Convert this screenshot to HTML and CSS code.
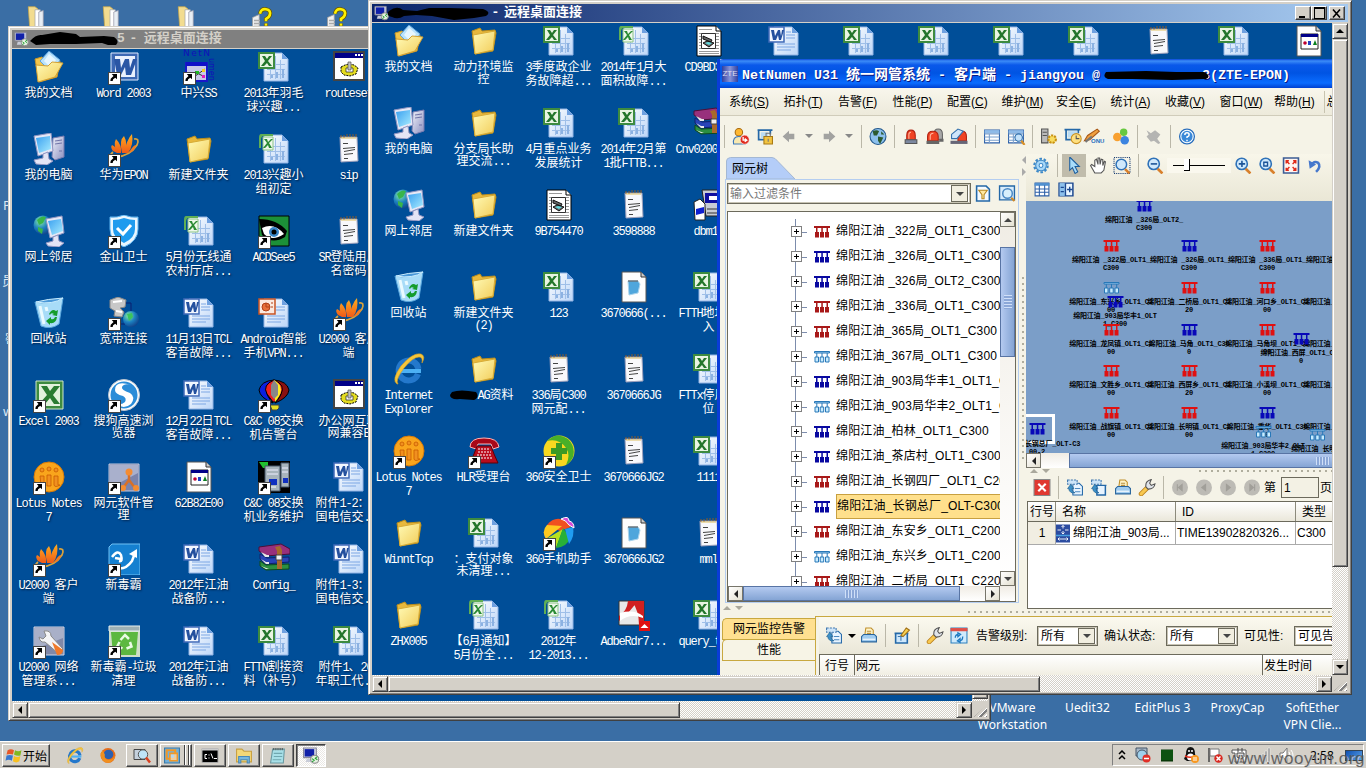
FILE: index.html
```html
<!DOCTYPE html>
<html lang="zh-CN">
<head>
<meta charset="utf-8">
<title>远程桌面连接</title>
<link rel="stylesheet" href="styles.css">
</head>
<body>
<svg class="defs" width="0" height="0">
<defs>
<linearGradient id="gf" x1="0" y1="0" x2="1" y2="1"><stop offset="0" stop-color="#fffbb8"/><stop offset="1" stop-color="#f2cc58"/></linearGradient>
<linearGradient id="gb" x1="0" y1="0" x2="1" y2="1"><stop offset="0" stop-color="#3aa0f0"/><stop offset="1" stop-color="#a8ecff"/></linearGradient>
<linearGradient id="gp" x1="0" y1="0" x2="1" y2="1"><stop offset="0" stop-color="#fff"/><stop offset="1" stop-color="#bcd6f8"/></linearGradient>
<linearGradient id="gg" x1="0" y1="0" x2="1" y2="1"><stop offset="0" stop-color="#f0f2fa"/><stop offset="1" stop-color="#8c90c0"/></linearGradient>
<linearGradient id="go" x1="0" y1="0" x2="0" y2="1"><stop offset="0" stop-color="#ffb020"/><stop offset="1" stop-color="#f05a18"/></linearGradient>
<radialGradient id="gl" cx=".35" cy=".3" r=".8"><stop offset="0" stop-color="#8cf0a0"/><stop offset=".5" stop-color="#1c80c0"/><stop offset="1" stop-color="#103880"/></radialGradient>
</defs>
<symbol id="folder" viewBox="0 0 32 32"><path d="M4 6l8-3 2 3 13-1 1 3-3 18-18 3z" fill="#e8b83c" stroke="#b98d1c"/><path d="M5 10l22-4-2 19-18 4z" fill="url(#gf)" stroke="#d7ab35"/></symbol>
<symbol id="docs" viewBox="0 0 32 32"><path d="M2 8l7-2 3 3 15 1-3 16-18 5z" fill="#f2c64c" stroke="#c6962a"/><path d="M7 10L16 0l11 9-8 13z" fill="#b9e2fc" stroke="#5fa2dc"/><path d="M11 10l5-7 7 6-5 8z" fill="#e6f6ff"/><path d="M3 14l12 1 4-4 11 1-8 14-17 5z" fill="url(#gf)" stroke="#d4a133"/></symbol>
<symbol id="pc" viewBox="0 0 32 32"><path d="M20 5l11-2v21l-9 3-3-3z" fill="url(#gg)" stroke="#777bb0"/><path d="M22 8l7-1M22 11l7-1M26 18h3" stroke="#7074a8" fill="none"/><path d="M1 3l17-3 2 18-15 5z" fill="#e6e8f6" stroke="#8e94c0"/><path d="M3 5l14-2 1 13-12 4z" fill="url(#gb)"/><path d="M10 21l5-2 1 7 4 2-6 4-11-1-2-4 9-2z" fill="#e4e5f5" stroke="#9296c2"/></symbol>
<symbol id="net" viewBox="0 0 32 32"><circle cx="10" cy="10" r="9.500" fill="url(#gl)"/><path d="M4 5q5-5 9-3l-3 6-4 2zM5 12l5 2-1 5-4-3z" fill="#39b54a"/><path d="M13 4l16-3 2 17-14 5z" fill="#e6e8f6" stroke="#8e94c0"/><path d="M15 6l13-2 2 12-11 4z" fill="url(#gb)"/><path d="M20 22l5-2 1 6 5 2-5 4-11-1-2-3 7-2z" fill="#e4e5f5" stroke="#9296c2"/></symbol>
<symbol id="bin" viewBox="0 0 32 32"><path d="M2 5Q16 8 30 1l-4 26q-8 6-18 2z" fill="#a8dcf8" stroke="#5aa7de"/><path d="M3 5Q14 2 30 1 20 8 3 5z" fill="#4a98d8" stroke="#cbeeff"/><path d="M7 9l4 18M13 10l1 4" stroke="#eafaff" stroke-width="3" fill="none"/><path d="M16 17q3-6 7-3l2-1-1 6-5-1 2-1q-3-2-4 1zM24 20q-1 7-7 6v2l-4-4 5-4v2q3 1 4-2z" fill="#149c2c"/></symbol>
<symbol id="ie" viewBox="0 0 32 32"><path d="M25 21a10 10 0 1 1 .5-5" fill="none" stroke="#2478cc" stroke-width="6"/><path d="M7 18h21" stroke="#4cb0f4" stroke-width="4"/><path d="M4 31Q-2 27 8 13 20-1 28 1q5 2 1 9 1-6-3-6-6 0-15 11Q2 27 5 31z" fill="#f6c63a" stroke="#d8a020" stroke-width=".6"/></symbol>
<symbol id="lotus" viewBox="0 0 32 32"><circle cx="16" cy="16" r="15" fill="#f9a51c" stroke="#d87a08"/><path d="M7 15l4 0v9q0 2-5 0h2zM14 14h4v11h-4zM21 15h4v9h2q-5 3-6 0z" fill="#f09020" stroke="#c85c00" stroke-width=".8"/><g fill="#f09020" stroke="#c85c00" stroke-width=".8"><circle cx="9" cy="9" r="2"/><circle cx="16" cy="8" r="2"/><circle cx="23" cy="9" r="2"/></g></symbol>
<symbol id="word" viewBox="0 0 32 32"><path d="M3 2h27v27H3z" fill="#3c68b4" stroke="#dfeaff"/><path d="M7 5h20v21H7z" fill="#e9f0fd"/><path d="M6 8h6l1 9 4-9h4l1 9 3-9h4l-6 16h-5l-1-8-4 8H9z" fill="#2a56a5"/></symbol>
<symbol id="excel" viewBox="0 0 32 32"><path d="M3 2h27v28H3z" fill="#3d8b40" stroke="#cfe8c8"/><path d="M6 5h21v22H6z" fill="#e2f2dc"/><path d="M8 7h6l3 5 4-5h6l-7 9 7 9h-6l-4-6-5 6H6l8-9z" fill="#2a7c31"/></symbol>
<symbol id="page" viewBox="0 0 32 32"><path d="M6 2h18l6 6v22H6z" fill="url(#gp)" stroke="#93b4e4"/><path d="M24 2v6h6z" fill="#6ea0e0"/></symbol>
<symbol id="wdoc" viewBox="0 0 32 32"><use href="#page"/><path d="M18 7h5M18 10h9M18 13h9M9 19h18M9 22h18M9 25h14" stroke="#7da7e4"/><path d="M1 2h15v15H1z" fill="#f2f7ff" stroke="#3f6ab8" stroke-width="1.500"/><path d="M3 5h3l1 6 3-6h2l1 6 1-6h2l-3 10h-2l-1-5-2 5H5z" fill="#24509e"/></symbol>
<symbol id="xdoc" viewBox="0 0 32 32"><use href="#page"/><path d="M11 13.500h16M9 18.500h18M9 23.500h18M12.500 14v14M17.500 5v23M22.500 9v19" stroke="#9fbfe8"/><path d="M13 24h2v3h-2zM18 21h2v6h-2zM24 18h2v9h-2z" fill="#8cb2e2"/><path d="M1 2h15v15H1z" fill="#e8f4e2" stroke="#3d8b40" stroke-width="2"/><path d="M4 5h3l2 3 2-3h3l-4 5 4 5h-3l-2-3-3 3H3l4-5z" fill="#23762b"/></symbol>
<symbol id="xdoc2" viewBox="0 0 32 32"><use href="#page"/><path d="M11 13.500h16M9 18.500h18M9 23.500h18M12.500 14v14M17.500 5v23M22.500 9v19" stroke="#9fbfe8"/><path d="M13 24h2v3h-2zM18 21h2v6h-2zM24 18h2v9h-2z" fill="#8cb2e2"/><path d="M3 1h12v2h-9q-3 0-3 4v8H1V5q0-4 2-4z" fill="#5fae55"/><path d="M5 4h10v13H5z" fill="#eef8ea" stroke="#8cc486"/><path d="M6 6h3l1 3 3-3h2l-4 4 3 5h-3l-1-3-3 3H5l4-5z" fill="#2a8a33"/></symbol>
<symbol id="ppt" viewBox="0 0 32 32"><use href="#page"/><path d="M18 10h9M18 13h9M9 19h18M9 22h18M9 25h14" stroke="#7da7e4"/><path d="M1 2h16v15H1z" fill="#fbe9e0" stroke="#c85424" stroke-width="1.500"/><circle cx="8" cy="10" r="4" fill="#e8703c" stroke="#b04018"/><path d="M8 6v4h4M14 5v2M14 9v2" stroke="#b04018" fill="none"/></symbol>
<symbol id="note" viewBox="0 0 32 32"><path d="M7 4l17 0 1 24-17 1z" fill="#f8f8fb" stroke="#9ca0bc"/><path d="M10 10.500h5M10 15.500l12-1M11 18.500l11-2M11 21.500l9-1M11 25.500h4" stroke="#444"/><path d="M8 2v3M11 2v3M14 1v3M17 1v3M20 1v3M23 1v3" stroke="#8a5a28"/><path d="M8 5h15" stroke="#e0c060"/></symbol>
<symbol id="bpage" viewBox="0 0 32 32"><path d="M4 1h19l5 5v25H4z" fill="#fdfdfd" stroke="#555"/><path d="M23 1v5h5" fill="#ccc" stroke="#333"/></symbol>
<symbol id="txt" viewBox="0 0 32 32"><use href="#bpage"/><path d="M10 10l10 0 2 3-2 9-9 2z" fill="#4fa6dc" stroke="#a9d3ec"/><path d="M10 10h10" stroke="#444"/></symbol>
<symbol id="dll" viewBox="0 0 32 32"><use href="#bpage"/><path d="M8 9h17v15H8z" fill="#fff" stroke="#222"/><path d="M8 9h17v3H8z" fill="#000088"/><circle cx="12" cy="18" r="1.800" fill="#c00030"/><path d="M15 16h3v4h-3z" fill="#2040c0"/><path d="M22 15l2 5h-4z" fill="#0a8020"/></symbol>
<symbol id="scan" viewBox="0 0 32 32"><path d="M4 1h19l5 5v25H4z" fill="#fff" stroke="#000"/><path d="M6 4.500h13M6 28.500h20M6 26.500h20M6 8.500h20M6 11.500h20M6 14.500h20M6 17.500h20M6 20.500h20M6 23.500h20" stroke="#999" fill="none"/><path d="M23 1v5h5" stroke="#000" fill="#fff"/><path d="M8.500 8.500h14v15h-14z" fill="#fff" stroke="#333"/><path d="M10 11l9 4-1 2-8-3zM10 18l4-2 7 2-5 4z" fill="#666" stroke="#111"/><path d="M12 18l3-1 4 1-3 2z" fill="#5fd8dc"/></symbol>
<symbol id="exe" viewBox="0 0 32 32"><path d="M1 1h30v28H1z" fill="#fff" stroke="#444" stroke-width="2"/><path d="M2 2h28v5H2z" fill="#000088"/><path d="M22 3h2v2h-2zM25 3h2v2h-2zM28 3h2v2h-2z" fill="#fff"/><path d="M8 16l4-2 4-1 5 1 4 3-2 6-6 2-6-1-3-3z" fill="#e4dc20" stroke="#000" stroke-dasharray="2 1"/><path d="M13 17h7v4h-7z" fill="#fff" stroke="#222" stroke-width=".7"/><path d="M15 11h3v8h-3z" fill="#c0c0c0" stroke="#555" stroke-width=".7"/></symbol>
<symbol id="rar" viewBox="0 0 32 32"><path d="M1 4l22-3 9 5v5l-24 2-7-5z" fill="#98307c" stroke="#4a1038"/><path d="M2 11l7 4 22-1v5l-23 2-6-5z" fill="#2844b8" stroke="#10206a"/><path d="M2 18l6 4 23-1v5L8 27l-6-4z" fill="#2c9040" stroke="#0e4a1c"/><path d="M3 9l6 3 2 0v2H7zM3 16l5 3h3v2H8zM3 23l5 3h3" fill="#e8e8e8"/><path d="M17 4l5-1 2 4v19h-5V8z" fill="#a86a2c"/><path d="M18 12h6v5h-6z" fill="#eee" stroke="#444"/></symbol>
<symbol id="hw" viewBox="0 0 32 32"><path d="M5 19Q-1 24 8 24 22 23 29 12 32 5 26 6" fill="none" stroke="#d9a23c" stroke-width="1.700"/><path d="M5 18Q2 14 4 12q5 2 5 8zM9 20Q5 11 8 6q6 6 5 14zM14 20Q11 7 16 3q4 7 1 17zM17 20Q18 7 24 1q2 11-4 19z" fill="url(#go)"/><path d="M21 20q4-8 7-8-1 6-7 8z" fill="#f47a20"/></symbol>
<symbol id="shield" viewBox="0 0 32 32"><path d="M2 2q7 1 14-2 7 3 14 2v12q0 12-14 18Q2 26 2 14z" fill="#e9f6ff" stroke="#5db4f0"/><path d="M5 5q6 0 11-2 6 2 11 2v9q0 9-11 14Q5 23 5 14z" fill="#1f9bee"/><path d="M9 13l6 6 8-9" fill="none" stroke="#fff" stroke-width="3"/></symbol>
<symbol id="acd" viewBox="0 0 32 32"><path d="M1 1h30v30H1z" fill="#1c9038" stroke="#000"/><path d="M1 4q18 0 28 12l-2 6Q14 30 4 20z" fill="#000"/><path d="M4 13q12-6 22 6-12 8-20 0z" fill="#fff"/><circle cx="16" cy="17" r="5" fill="#3a86c8"/><circle cx="16" cy="17" r="2.500"/></symbol>
<symbol id="band" viewBox="0 0 32 32"><path d="M2 3l8-3 8 3-1 7-5 1 4 4-2 5-8-1 1-5-5-3z" fill="#c8c8c8" stroke="#888"/><path d="M5 5l9-1M8 14l6 1" stroke="#fff" stroke-width="2"/><path d="M18 6h5v12M10 27h7" fill="none" stroke="#0a1f70"/><circle cx="23" cy="22" r="8" fill="url(#gl)"/><path d="M19 17l5-1 1 4-4 4z" fill="#3cc45c"/></symbol>
<symbol id="sogou" viewBox="0 0 32 32"><circle cx="16" cy="16" r="15.500" fill="#fff" stroke="#bbc5d0"/><circle cx="16" cy="16" r="13.500" fill="#2a8cd8"/><path d="M23 6Q7 1 7 11q0 4 8 6 4 2 2 6-3 3-9 2 8 6 15 0 5-7-1-11-9-3-8-6 2-4 9-2z" fill="#fff"/></symbol>
<symbol id="ball" viewBox="0 0 32 32"><path d="M16 1Q3 2 1 11q1 8 14 13Q1 9 16 1z" fill="#0a20e0" stroke="#000"/><path d="M16 1q13 1 15 10-1 8-14 13Q31 9 16 1z" fill="#8a1010" stroke="#000"/><path d="M16 1Q4 6 9 15l6 8h2l6-8Q28 6 16 1z" fill="#f02020" stroke="#000"/><path d="M16 1q7 4 7 10 0 5-6 12z" fill="#ffec20"/><path d="M13 6l3-5 4 5v10l-4 4-3-4z" fill="#888"/><path d="M12 26h9v3l-2 2h-5z" fill="#e8e020" stroke="#444"/></symbol>
<symbol id="topo" viewBox="0 0 32 32"><path d="M1 3h30v27H1z" fill="#7b84ac" stroke="#c5c9dc"/><path d="M2 4h28v8L2 27z" fill="#a9b0cc"/><path d="M21 13v6l-6 8M21 19l6 8" stroke="#d87028" stroke-width="2.500" fill="none"/><g fill="#f48c32"><circle cx="21" cy="11" r="3.500"/><circle cx="15" cy="27" r="3"/><circle cx="28" cy="27" r="3"/></g></symbol>
<symbol id="srv" viewBox="0 0 32 32"><path d="M0 0h32v32H0z"/><path d="M1 1h9v6H5z" fill="#20c030"/><path d="M7 5h15v25H7zM23 2h8v24h-8z" fill="#a8b4bc" stroke="#456"/><path d="M9 9h11M9 13h11M24 7h6M24 11h6" stroke="#eef"/><path d="M11 18h8v6h-8zM25 17h5v5h-5z" fill="#1030c0"/><path d="M13 26h5" stroke="#fff"/></symbol>
<symbol id="duba" viewBox="0 0 32 32"><path d="M4 1h28v31H1V4z" fill="#1580d0" stroke="#6fc0f4"/><path d="M4 14q6-8 9-2 2 7-2 6M13 16l-6-1M6 24q10 5 18-6l3-8" fill="none" stroke="#fff" stroke-width="2.500"/><path d="M21 11l8-5 0 9z" fill="#fff"/></symbol>
<symbol id="gtrash" viewBox="0 0 32 32"><path d="M1 1h31v31H1z" fill="#cfdfc8"/><path d="M1 1h31v5H1z" fill="#9db0b5" stroke="#e8f0f0"/><path d="M3 7h27l-2 23H5z" fill="#5cb840"/><path d="M12.500 15l4.500-5 4 4M22 17l1.500 4.500-5 2M11.500 17l-2 4 5 2.500" fill="none" stroke="#eafbe4" stroke-width="2.500"/></symbol>
<symbol id="wren" viewBox="0 0 32 32"><path d="M1 2h30v28H1z" fill="#8088a8" stroke="#d0d4e4"/><path d="M2 3h28v10L2 24z" fill="#a9b0c8"/><path d="M11 6q7-1 7 5l12 13-4 5-14-12q-5 1-6-5l4 2 3-3z" fill="#f4f4f6" stroke="#888"/><path d="M19 17l11 8q0 5-6 5z" fill="#f0792a"/></symbol>
<symbol id="nnum" viewBox="0 0 32 32"><path d="M3 12h21v18H3z" fill="#c8c8e8" stroke="#1818c8" stroke-width="2"/><path d="M3 11h21v4H3z" fill="#1010c8"/><path d="M8 28l14-10M22 26l-8-4" stroke="#333"/><path d="M12 20h4v3h-4z" fill="#20b820"/><path d="M19 18h3v3h-3z" fill="#f0d020"/><path d="M19 24h3v3h-3z" fill="#e020c0"/></symbol>
<symbol id="phone" viewBox="0 0 32 32"><path d="M2 12Q2 3 16 3q14 0 15 9l-6 2-2-5H10l-2 5z" fill="#a80818" stroke="#ffb0b0"/><path d="M9 11h14l3 8 4 9H2l4-9z" fill="#b80c1c" stroke="#5a0008"/><path d="M10 14h12M10 17h13M9 20h15M10 23h14" stroke="#fff" stroke-dasharray="2 1"/></symbol>
<symbol id="s360" viewBox="0 0 32 32"><circle cx="16" cy="16" r="15.500" fill="#f8d820"/><path d="M4 6Q14-4 25 4q8 8 5 18-3 6-7 8 5-10 0-17-7-10-19-7z" fill="#48b028"/><path d="M13 8h6v5h5v6h-5v6h-6v-6H8v-6h5z" fill="#3c9a24"/></symbol>
<symbol id="p360" viewBox="0 0 32 32"><path d="M4 8Q12-2 23 4l5 6-11 4z" fill="#f05020"/><path d="M4 8l15 1-16 13Q-2 14 4 8z" fill="#ffc820"/><path d="M3 22l17-10-7 19Q6 30 3 22z" fill="#b8e020"/><path d="M20 11l7 10q-3 9-14 10z" fill="#28b038"/><path d="M22 12l8-2q2 9-4 17z" fill="#209cf0"/><path d="M18 2q8-4 8 2 5 1 5 7l-5-3q-3-5-8-6z" fill="#d848d8" stroke="#fff"/></symbol>
<symbol id="pdf" viewBox="0 0 32 32"><path d="M1 2h25v24H1z" fill="#e8e8e8" stroke="#333"/><path d="M10 2h10L10 14l-9 8v-5q8-5 9-15zM14 2h12v24l-5 0q0-14-7-24z" fill="#d02020"/><path d="M2 14q14-4 23 3v2Q12 14 2 22z" fill="#fff"/><path d="M21 22h11v10H21z" fill="#e01010"/><path d="M26.500 25l4 4h-8z" fill="#fff"/></symbol>
<symbol id="dbm" viewBox="0 0 32 32"><path d="M9 1h23v26H13z" fill="#c8ccd4" stroke="#222"/><path d="M12 4h20v10H12z" fill="#1010a0"/><path d="M16 7h9v4h-9z" fill="#fff"/><path d="M1 13l6-3 5 5v16H2z" fill="#fff" stroke="#222"/><path d="M3 20l8-2v6l-8 2z" fill="#1020d0"/><path d="M14 20h18M14 24h18" stroke="#333"/></symbol>
<symbol id="qdoc" viewBox="0 0 32 32"><path d="M2 14l9-4v20H2z" fill="#eee" stroke="#999"/><path d="M4 18h8M4 22h8M4 26h8" stroke="#aaa" stroke-width="2"/><path d="M12 9q1-7 8-6 7 1 5 8-1 3-5 5v3M20 22v3" fill="none" stroke="#665500" stroke-width="5.500"/><path d="M12 9q1-7 8-6 7 1 5 8-1 3-5 5v3M20 22v3" fill="none" stroke="#fff000" stroke-width="3.500"/></symbol>
<symbol id="vfold" viewBox="0 0 32 32"><path d="M3 1h9l4 3v26H5z" fill="#f2dc90" stroke="#caa848"/><path d="M12 5h7v25h-7z" fill="#fff" stroke="#aaa"/><path d="M17 8l6-2v24h-6z" fill="#e8eef4" stroke="#99a"/></symbol>
<symbol id="rdp" viewBox="0 0 16 16"><path d="M1 1h12v9H1z" fill="#d4d8e8" stroke="#889"/><path d="M2 2h9v7H2z" fill="#1020a8"/><path d="M4 11h5l2 3H3z" fill="#c8ccd8"/><circle cx="11.500" cy="11.500" r="3.800" fill="#e4f0e0" stroke="#888"/><path d="M9 11l2 1.500L9 14M14 9l-2 1.500 2 1.500" stroke="#20a030" fill="none"/></symbol>
<symbol id="olt" viewBox="0 0 16 12"><path d="M0 0h16v2H0z"/><path d="M2 2h1.500v4H2zM7.300 2h1.500v4H7.300zM12.500 2H14v4h-1.500z"/><path d="M1 6h4v5.500H1zM6 6h4v5.500H6zM11 6h4v5.500h-4z"/></symbol>
<symbol id="olth" viewBox="0 0 16 12"><path d="M.5.500h15v1.500H.5zM2.800 2v4M8 2v4M13.200 2v4" fill="#9fd0f4" stroke="#2878b8"/><path d="M1 6h3.500v5H1zM6.200 6h3.500v5H6.200zM11.500 6H15v5h-3.500z" fill="#c8ecff" stroke="#2878b8"/></symbol>
<symbol id="usr" viewBox="0 0 16 16"><circle cx="6" cy="4" r="3.500" fill="#ffb830" stroke="#a86a10"/><path d="M1 15q-1-7 5-7t6 7z" fill="#f8e8b0" stroke="#3c78b8"/><circle cx="11.500" cy="11" r="4.300" fill="#e02c20" stroke="#fff" stroke-width=".6"/><path d="M10 8.500v3h3M11.500 10l2 1.500-2 1.500" stroke="#fff" fill="none" stroke-width="1.200"/></symbol>
<symbol id="lock" viewBox="0 0 16 16"><path d="M1 2h14M2 2v9h5M13 2v4" stroke="#2468a8" stroke-width="1.600" fill="none"/><path d="M4 4h7v6H4z" fill="#b9dcf4"/><path d="M7 8h8v7H7z" fill="#f2c440" stroke="#a87810"/><path d="M9 8V5h4v3M11 10v3" stroke="#777" fill="none"/></symbol>
<symbol id="la" viewBox="0 0 16 16"><path d="M2 8l6-5.500v3h5v5H8v3z" fill="#a2a2a0"/></symbol>
<symbol id="ra" viewBox="0 0 16 16"><path d="M14 8L8 2.500v3H3v5h5v3z" fill="#a2a2a0"/></symbol>
<symbol id="globe" viewBox="0 0 16 16"><circle cx="8" cy="8" r="7.500" fill="#8cc0ec" stroke="#24588c"/><path d="M3 3q4-2 6 0l-2 4-3 0zM8 8l5 1-3 6-2-3zM11 3l3 3-3 0z" fill="#2c5a30"/></symbol>
<symbol id="alarm" viewBox="0 0 16 16"><path d="M4 11V7q0-5 4-5t4 5v4z" fill="#f04424" stroke="#b02010"/><path d="M6 10V6q0-2 2-2" stroke="#ffb8a0" fill="none"/><path d="M2.500 11h11v3.500h-11z" fill="#7c88a0" stroke="#555"/></symbol>
<symbol id="alarm2" viewBox="0 0 16 16"><path d="M7 9V6q0-5 4-5t4 5v5h-4z" fill="#a8a8a8" stroke="#666"/><path d="M1 12V8q0-5 5-5t5 5v4z" fill="#f04424" stroke="#b02010"/><path d="M3.500 11V8q0-3 3-3" stroke="#ffb8a0" fill="none"/><path d="M0 12h12v3H0zM12 10h4v3h-4z" fill="#666"/></symbol>
<symbol id="alarm3" viewBox="0 0 16 16"><path d="M7 12V8q0-5 4-5t4 5v4z" fill="#f04424" stroke="#b02010"/><path d="M0 12h16v3H0z" fill="#667"/><path d="M1 6l6-5 5 2-6 7H1z" fill="#cfe5fa" stroke="#3470ac"/></symbol>
<symbol id="tbl" viewBox="0 0 16 16"><path d="M1 2h14v12H1z" fill="#fff" stroke="#2c5fa8"/><path d="M1 2h14v3H1z" fill="#8fbbe8"/><path d="M1 5.500h14M1 8.500h14M1 11.500h14M5.500 5v9" stroke="#7ba0cc" fill="none"/></symbol>
<symbol id="tblz" viewBox="0 0 16 16"><use href="#tbl"/><circle cx="10.500" cy="9" r="3.500" fill="#c4e2fa" stroke="#2a6cac"/><path d="M13 12l3 4" stroke="#d89028" stroke-width="2"/></symbol>
<symbol id="boxg" viewBox="0 0 16 16"><path d="M1 1h6v13H1z" fill="#bbb" stroke="#555"/><path d="M2 4h4M2 7h4" stroke="#555"/><circle cx="11" cy="10.500" r="3.500" fill="#f8dc60" stroke="#c89010" stroke-width="2" stroke-dasharray="2 1"/></symbol>
<symbol id="clk" viewBox="0 0 16 16"><path d="M0 1.500h15M1.500 1v10H6M13 1v4" fill="none" stroke="#2468a8" stroke-width="1.600"/><path d="M3 3h9v6H3z" fill="#b9dcf4"/><circle cx="11" cy="10" r="4.700" fill="#ffe080" stroke="#c89020"/><path d="M11 7v3h3" stroke="#555" fill="none"/></symbol>
<symbol id="onu" viewBox="0 0 20 16"><path d="M1 12l5-1 9-8-2-2-9 6z" fill="#f0a040" stroke="#a85818"/><path d="M2 13l6-5" stroke="#777" stroke-width="2"/></symbol>
<symbol id="dots" viewBox="0 0 16 16"><circle cx="10.500" cy="4" r="3.500" fill="#68c840"/><circle cx="4.500" cy="8.500" r="4" fill="#f8a030"/><circle cx="11.500" cy="11.500" r="4" fill="#3c84e0"/></symbol>
<symbol id="unp" viewBox="0 0 16 16"><path d="M1 2l4 3 4-3 5 4-3 4 3 4-2 1-4-3-3 1-4-5 2-2z" fill="#b4b4b2"/></symbol>
<symbol id="help" viewBox="0 0 16 16"><circle cx="8" cy="8" r="7" fill="#3a88d8" stroke="#2468b8"/><circle cx="8" cy="8" r="5.800" fill="none" stroke="#fff"/><path d="M6 6.500q0-2 2-2t2 2q0 1-2 2v1M8 11v1.500" stroke="#fff" stroke-width="1.400" fill="none"/></symbol>
<symbol id="funl" viewBox="0 0 16 16"><path d="M2 1h9l3 3v11H2z" fill="#f4faff" stroke="#2468a8" stroke-width="1.500"/><path d="M4 5h8L9 9v4H7V9z" fill="#ffe8a0" stroke="#b88820"/></symbol>
<symbol id="find" viewBox="0 0 16 16"><path d="M1 1h14v13H1z" fill="#d8ecfc" stroke="#2468a8" stroke-width="1.300"/><circle cx="8.500" cy="8" r="4.500" fill="#d8effc" stroke="#4a88c4" stroke-width="1.400"/><path d="M12 12l3 3" stroke="#d08828" stroke-width="2"/></symbol>
<symbol id="gear" viewBox="0 0 16 16"><circle cx="8" cy="8" r="6.300" fill="none" stroke="#3c88c8" stroke-width="2" stroke-dasharray="2.400 1.600"/><circle cx="8" cy="8" r="5" fill="#a8d8f8" stroke="#3c88c8"/><circle cx="8" cy="8" r="1.800" fill="#fff" stroke="#3c88c8"/></symbol>
<symbol id="cur" viewBox="0 0 16 16"><path d="M4 0l9 9-4 0 2.500 5-2.500 1.500L6.500 10 4 12.500z" fill="#a8dcfa" stroke="#1c5c9c"/></symbol>
<symbol id="hand" viewBox="0 0 16 16"><path d="M5 15L1 8l1-1 3 2V3l1.500-1L8 7V1l1.500 0L10 7l1-5 1.500.5V8l1.500-4 1 .5-1.500 8L11 15z" fill="#fff" stroke="#555"/></symbol>
<symbol id="mag" viewBox="0 0 16 16"><circle cx="6.800" cy="6.500" r="5.300" fill="#d0e9fc" stroke="#2f72b8" stroke-width="1.500"/><path d="M10.500 11l4.500 4.500" stroke="#d8802c" stroke-width="2.500"/></symbol>
<symbol id="magm" viewBox="0 0 16 16"><use href="#mag"/><path d="M4 6.500h6" stroke="#1c5498" stroke-width="1.500"/></symbol>
<symbol id="magp" viewBox="0 0 16 16"><use href="#mag"/><path d="M4 6.500h6M7 3.500v6" stroke="#1c5498" stroke-width="1.500"/></symbol>
<symbol id="mago" viewBox="0 0 16 16"><use href="#mag"/><path d="M5 5h3.500v3.500H5z" fill="none" stroke="#1c5498" stroke-width="1.300"/></symbol>
<symbol id="mags" viewBox="0 0 16 16"><path d="M.5.500h15v15H.5z" fill="none" stroke="#123870" stroke-dasharray="1 1"/><use href="#mag" width="15" height="15" x="1" y="1"/></symbol>
<symbol id="fit" viewBox="0 0 16 16"><path d="M1 1h14v14H1z" fill="#fff4f0" stroke="#3c5c94" stroke-width="1.500"/><path d="M3.500 6V3.500H6M10 3.500h2.500V6M3.500 10v2.500H6M12.500 10v2.500H10M3.500 3.500l3 3M12.500 3.500l-3 3M3.500 12.500l3-3M12.500 12.500l-3-3" stroke="#e02818" fill="none" stroke-width="1.300"/></symbol>
<symbol id="undo" viewBox="0 0 16 16"><path d="M4 8q3-5 7-2.500Q14 9 9 14" fill="none" stroke="#4678cc" stroke-width="2.400"/><path d="M2 3l1 8 6-4z" fill="#4678cc"/></symbol>
<symbol id="cal" viewBox="0 0 16 16"><path d="M1.500 2h13v12h-13z" fill="#fff" stroke="#2c5fa8"/><path d="M1 2h14v2.500H1z" fill="#5090d0"/><path d="M1.500 7.500h13M1.500 10.500h13M5.500 4v10M10.500 4v10" stroke="#2c5fa8" fill="none"/></symbol>
<symbol id="spl" viewBox="0 0 16 16"><path d="M1.500 2h13v12h-13z" fill="#eaf6ff" stroke="#1c4890" stroke-width="1.400"/><path d="M2 2h5v12H2z" fill="#8cc0ec"/><path d="M7.500 2v12M9 8h5M11.500 5.500v5M3 6h3M3 10h3" stroke="#1c4890" stroke-width="1.300" fill="none"/></symbol>
<symbol id="cls" viewBox="0 0 16 16"><path d="M.5.500h15v15H.5z" fill="#e03830" stroke="#888"/><path d="M4.500 4.500l7 7M11.500 4.500l-7 7" stroke="#fff" stroke-width="2"/></symbol>
<symbol id="exp" viewBox="0 0 16 16"><path d="M6 4h6l3 3v8H6z" fill="#e8f4ff" stroke="#2468a8"/><path d="M8 9h5M8 12h5" stroke="#4c88c0"/><path d="M1 1h9v4H1z" fill="#cce4f8" stroke="#4078b0" stroke-dasharray="2 1"/><path d="M1 9l3-4 3 4H5q0 3 3 4-5 1-6-4z" fill="#3c90c8" stroke="#1c5c8c" stroke-width=".6"/></symbol>
<symbol id="exp2" viewBox="0 0 16 16"><path d="M5 6h10M6 6v9h8V6" fill="#e8f4ff" stroke="#2468a8" stroke-width="1.400"/><path d="M1 1h9v4H1z" fill="#cce4f8" stroke="#4078b0" stroke-dasharray="2 1"/><path d="M1 9l3-4 3 4H5q0 3 3 4-5 1-6-4z" fill="#3c90c8" stroke="#1c5c8c" stroke-width=".6"/></symbol>
<symbol id="prn" viewBox="0 0 16 16"><path d="M4 8l1-7h5l2 2v5z" fill="#fff4c8" stroke="#c0902c"/><path d="M6 4h4M6 6h4" stroke="#b89040"/><path d="M1 9l2-2h10l2 2v5H1z" fill="#a0ccf0" stroke="#28649c"/><path d="M2 11.500h12" stroke="#fff"/></symbol>
<symbol id="key" viewBox="0 0 16 16"><path d="M2.500 14l7-7" stroke="#b87c18" stroke-width="4.500" stroke-linecap="round"/><path d="M2.500 14l7-7" stroke="#f8c850" stroke-width="3" stroke-linecap="round"/><path d="M7 7.500Q6 2 12 .5L10.500 4 12 6l3.500-1.500Q15 9.500 9 9.500z" fill="#e0e4ea" stroke="#555"/></symbol>
<symbol id="edit" viewBox="0 0 16 16"><path d="M1 6h13M2 6v9h11V6" fill="#cfe8fc" stroke="#2468a8" stroke-width="1.500"/><path d="M4 9h5M7 9v4" stroke="#3c78b0"/><path d="M7 8l5-7 3 2-6 6z" fill="#f8d050" stroke="#a07018"/></symbol>
<symbol id="ref" viewBox="0 0 16 16"><path d="M.5 1h15v14H.5z" fill="#cfeafc" stroke="#2c80c0"/><path d="M0 1h16v3H0z" fill="#e05048"/><path d="M4.500 10q0-3 3-3M11.500 9q0 4-3 4M7 5.500v3.500l2.500-2zM9 11v3.500L6.500 13z" stroke="#1c78c0" fill="none" stroke-width="1.200"/></symbol>
<symbol id="nav1" viewBox="0 0 16 16"><circle cx="8" cy="8" r="7.500" fill="#bdbbb5"/><path d="M10 5v6L6.500 8zM5.500 5v6" fill="#a19f99" stroke="#a19f99"/></symbol>
<symbol id="nav2" viewBox="0 0 16 16"><circle cx="8" cy="8" r="7.500" fill="#bdbbb5"/><path d="M10 4v8L5 8z" fill="#a19f99"/></symbol>
<symbol id="nav3" viewBox="0 0 16 16"><circle cx="8" cy="8" r="7.500" fill="#bdbbb5"/><path d="M6 4v8l5-4z" fill="#a19f99"/></symbol>
<symbol id="nav4" viewBox="0 0 16 16"><circle cx="8" cy="8" r="7.500" fill="#bdbbb5"/><path d="M6 5v6l3.500-3zM10.500 5v6" fill="#a19f99" stroke="#a19f99"/></symbol>
<symbol id="ne" viewBox="0 0 14 18"><path d="M0 0h14v18H0z" fill="#2c4ca0"/><path d="M0 11h14" stroke="#48a0e0" stroke-width="1.500"/><path d="M7 1v3M7 6.500v3M1.500 5.500H5M12.500 5.500H9M2 14.500h10M3.500 13L2 14.500 3.500 16M10.500 13l1.500 1.500L10.500 16M5.500 2.500L7 1l1.500 1.500M5.500 8L7 9.500 8.500 8" stroke="#fff" fill="none" stroke-width=".9"/></symbol>
<symbol id="ff" viewBox="0 0 16 16"><circle cx="8" cy="8" r="7" fill="#e86c18"/><circle cx="8.500" cy="7" r="4.500" fill="#2c60b0"/><path d="M1 6q0 8 7 9 6-1 7-8-2 5-6 5-5 0-4-5L3 3z" fill="#f09020"/></symbol>
<symbol id="seek" viewBox="0 0 18 16"><path d="M1 2h11v10H1z" fill="#c4d0dc" stroke="#444"/><circle cx="10" cy="7" r="4.700" fill="#bfe4f8" stroke="#555"/><path d="M13 10l4 5" stroke="#d84020" stroke-width="2.500"/></symbol>
<symbol id="vm" viewBox="0 0 16 16"><path d="M1 1h14v14H1z" fill="#70b0dc" stroke="#3878a8"/><path d="M3 3h8v8H3z" fill="none" stroke="#f09828" stroke-width="2"/><path d="M6 6h7v7H6z" fill="#fff" fill-opacity=".5" stroke="#f09828" stroke-width="1.500"/></symbol>
<symbol id="cmd" viewBox="0 0 18 16"><path d="M1 1h16v14H1z" stroke="#aaa"/><path d="M1 1h16v2H1z" fill="#ccc"/><path d="M6 7H4v4h2M8 7v1M8 10v1M10 6l2 5M13 11h3" stroke="#fff" fill="none"/></symbol>
<symbol id="expl" viewBox="0 0 16 16"><path d="M1 2h5l2 2h7v10H1z" fill="#f4d878" stroke="#c8a040"/><path d="M3 15V9h10v6h-2v-3H5v3z" fill="#78b8e0" stroke="#4888b8"/></symbol>
<symbol id="nb" viewBox="0 0 16 16"><path d="M3 2h11l-1 13H1z" fill="#a8e0e8" stroke="#6898a0"/><path d="M4 6h8M4 9h8M3 12h8" stroke="#70a8b0"/><path d="M4 1v2M6 1v2M8 1v2M10 1v2M12 1v2" stroke="#555"/></symbol>
<symbol id="win" viewBox="0 0 16 16"><path d="M2 3q3-2 6 0L7 7Q4 6 1 7z" fill="#e85828"/><path d="M9 3q3 2 6 0l-1 5q-3 1-6-1z" fill="#80b820"/><path d="M1 8q3-1 6 0l-1 5q-3-2-6 0z" fill="#3878d0"/><path d="M8 8.500q3 2 6 0l-1 5q-3 2-6 0z" fill="#f8c020"/></symbol>
<symbol id="t1" viewBox="0 0 16 16"><path d="M1 1h11v8H1z" fill="#a8b8c8" stroke="#456"/><circle cx="7" cy="8" r="5" fill="#9fd0ec" stroke="#456"/><circle cx="11.500" cy="11.500" r="4" fill="#e03028"/><path d="M9 11.500h5" stroke="#fff" stroke-width="1.500"/></symbol>
<symbol id="t2" viewBox="0 0 12 12"><path d="M0 0h12v12H0z" fill="#083808"/><path d="M1 1v10M3 1v10M5 1v10M7 1v10M9 1v10M11 1v10" stroke="#18a028" stroke-dasharray="1 1"/></symbol>
<symbol id="t3" viewBox="0 0 16 16"><path d="M3 7q0-7 4.500-7T12 7l2 5-3 2H4l-3-2z" fill="#111"/><circle cx="7.500" cy="10" r="3.500" fill="#fff"/><path d="M6 3v2M9 3v2" stroke="#fff" stroke-width="1.500"/><path d="M2 8q6 3 10 0v2q-5 2-10 0z" fill="#e03020"/><circle cx="12" cy="12" r="4" fill="#f89820"/><path d="M10 11h4M10 13h4" stroke="#fff"/></symbol>
<symbol id="t4" viewBox="0 0 16 16"><path d="M2 1v14" stroke="#444" stroke-width="1.500"/><path d="M3 2h9v7H3z" fill="#fff" stroke="#777"/><circle cx="11.500" cy="11.500" r="4.200" fill="#d82820"/><path d="M9.500 9.500l4 4M13.500 9.500l-4 4" stroke="#fff" stroke-width="1.500"/></symbol>
<symbol id="t5" viewBox="0 0 16 16"><path d="M1 3h14v12H4V6H1z" fill="#fff" stroke="#555"/><path d="M7 1v4M11 1v4M6 6h7v4l-3 2-4-2zM10 12v3" stroke="#444" fill="#ddd"/></symbol>
<symbol id="t6" viewBox="0 0 16 16"><path d="M1 12h2v3H1zM4 10h2v5H4zM7 7h2v8H7zM10 4h2v11h-2zM13 1h2v14h-2z" fill="#999" stroke="#fff" stroke-width=".4"/></symbol>
<symbol id="t7" viewBox="0 0 16 16"><path d="M1 6h3l4-5v14l-4-5H1z" fill="#fff" stroke="#777"/><path d="M10 5q2 3 0 6M12 3q4 5 0 10" stroke="#fff" fill="none"/></symbol>
</svg>

<main class="desk">
  <div class="dk" style="left:0;top:6px"><svg><use href="#vfold"/></svg></div>
  <div class="dk" style="left:75px;top:6px"><svg><use href="#vfold"/></svg></div>
  <div class="dk" style="left:150px;top:6px"><svg><use href="#vfold"/></svg></div>
  <div class="dk" style="left:225px;top:7px"><svg><use href="#qdoc"/></svg></div>
  <div class="dk" style="left:300px;top:7px"><svg><use href="#qdoc"/></svg></div>
  <span class="frag" style="left:3px;top:197px">P</span>
  <span class="frag" style="left:2px;top:272px">员</span>
  <span class="frag" style="left:5px;top:330px">密</span>
  <span class="frag" style="left:3px;top:403px">w</span>
  <span class="cap" style="left:975px">VMware<br>Workstation</span>
  <span class="cap" style="left:1050px">Uedit32</span>
  <span class="cap" style="left:1125px">EditPlus 3</span>
  <span class="cap" style="left:1200px">ProxyCap</span>
  <span class="cap" style="left:1275px">SoftEther<br>VPN Clie...</span>

  <section class="rdp rdp-back">
    <header class="rt"><svg class="i16"><use href="#rdp"/></svg><svg class="blot" width="90" height="14" viewBox="0 0 90 14"><path d="M0 9Q6 2 12 3L30 0l16 2 4 3 24-1 10 1q6 4 2 8l-8 0-6-2-26 1-26 0L6 13z"/></svg><b>5</b><b class="d">-</b><span>远程桌面连接</span></header>
    <div class="remote">
      <div class="icons shade">
<div class="c"><svg><use href="#docs"/></svg><p>我的文档</p></div>
<div class="c"><svg><use href="#pc"/></svg><p>我的电脑</p></div>
<div class="c"><svg><use href="#net"/></svg><p>网上邻居</p></div>
<div class="c"><svg><use href="#bin"/></svg><p>回收站</p></div>
<div class="c k"><svg><use href="#excel"/></svg><p><i>Excel 2003</i></p></div>
<div class="c k"><svg><use href="#lotus"/></svg><p><i>Lotus Notes<br>7</i></p></div>
<div class="c k"><svg><use href="#hw"/></svg><p><i>U2000 </i>客户<br>端</p></div>
<div class="c k"><svg><use href="#wren"/></svg><p><i>U2000 </i>网络<br>管理系<i>...</i></p></div>
<div class="c k"><svg><use href="#word"/></svg><p><i>Word 2003</i></p></div>
<div class="c k"><svg><use href="#hw"/></svg><p>华为<i>EPON</i></p></div>
<div class="c k"><svg><use href="#shield"/></svg><p>金山卫士</p></div>
<div class="c k"><svg><use href="#band"/></svg><p>宽带连接</p></div>
<div class="c k"><svg><use href="#sogou"/></svg><p>搜狗高速浏<br>览器</p></div>
<div class="c k"><svg><use href="#topo"/></svg><p>网元软件管<br>理</p></div>
<div class="c k"><svg><use href="#duba"/></svg><p>新毒霸</p></div>
<div class="c k"><svg><use href="#gtrash"/></svg><p>新毒霸<i>-</i>垃圾<br>清理</p></div>
<div class="c k nnico"><svg><use href="#nnum"/></svg><em>NetN</em><em class="v">umen</em><p>中兴<i>SS</i></p></div>
<div class="c"><svg><use href="#folder"/></svg><p>新建文件夹</p></div>
<div class="c"><svg><use href="#xdoc2"/></svg><p><i>5</i>月份无线通<br>农村厅店<i>...</i></p></div>
<div class="c"><svg><use href="#wdoc"/></svg><p><i>11</i>月<i>13</i>日<i>TCL</i><br>客音故障<i>...</i></p></div>
<div class="c"><svg><use href="#wdoc"/></svg><p><i>12</i>月<i>22</i>日<i>TCL</i><br>客音故障<i>...</i></p></div>
<div class="c"><svg><use href="#dll"/></svg><p><i>62B82E00</i></p></div>
<div class="c"><svg><use href="#wdoc"/></svg><p><i>2012</i>年江油<br>战备防<i>...</i></p></div>
<div class="c"><svg><use href="#wdoc"/></svg><p><i>2012</i>年江油<br>战备防<i>...</i></p></div>
<div class="c"><svg><use href="#xdoc"/></svg><p><i>2013</i>年羽毛<br>球兴趣<i>...</i></p></div>
<div class="c"><svg><use href="#xdoc2"/></svg><p><i>2013</i>兴趣小<br>组初定</p></div>
<div class="c k"><svg><use href="#acd"/></svg><p><i>ACDSee5</i></p></div>
<div class="c"><svg><use href="#ppt"/></svg><p><i>Android</i>智能<br>手机<i>VPN...</i></p></div>
<div class="c k"><svg><use href="#ball"/></svg><p><i>C&amp;C 08</i>交换<br>机告警台</p></div>
<div class="c k"><svg><use href="#srv"/></svg><p><i>C&amp;C 08</i>交换<br>机业务维护</p></div>
<div class="c"><svg><use href="#rar"/></svg><p><i>Config_</i></p></div>
<div class="c"><svg><use href="#xdoc"/></svg><p><i>FTTN</i>割接资<br>料（补号）</p></div>
<div class="c"><svg><use href="#exe"/></svg><p><i>routeset</i></p></div>
<div class="c"><svg><use href="#note"/></svg><p><i>sip</i></p></div>
<div class="c"><svg><use href="#note"/></svg><p><i>SR</i>登陆用户<br>名密码</p></div>
<div class="c k"><svg><use href="#hw"/></svg><p><i>U2000 </i>客户<br>端</p></div>
<div class="c"><svg><use href="#exe"/></svg><p>办公网互联<br>网兼容<i>B</i></p></div>
<div class="c"><svg><use href="#wdoc"/></svg><p>附件<i>1-2</i>：中<br>国电信交<i>...</i></p></div>
<div class="c"><svg><use href="#wdoc"/></svg><p>附件<i>1-3</i>：中<br>国电信交<i>...</i></p></div>
<div class="c"><svg><use href="#xdoc"/></svg><p>附件<i>1</i>、<i>201</i><br>年职工代<i>...</i></p></div>
      </div>
    </div>
    <div class="sb v"><span class="th" style="height:650px"></span></div>
    <div class="sb h"><span class="b lf"></span><span class="th" style="width:652px"></span><span class="b rt2"></span></div>
    <div class="grip"></div>
  </section>

  <section class="rdp rdp-front">
    <header class="rt"><svg class="i16"><use href="#rdp"/></svg><svg class="blot" width="102" height="14" viewBox="0 0 102 14"><path d="M1 5q8-6 14-1l14 1 12-3 20 0 34 1q9 3 3 7l-12 2-20 2-22-4-16-1-12 1q-6 4-12 1Q-3 9 1 5z"/></svg><b class="d">-</b><span>远程桌面连接</span><div class="wb"><u class="min"></u><u class="max"></u><u class="x"><svg width="10" height="9"><path d="M1 .5l7 8M8 .5l-7 8" stroke="#000" stroke-width="1.600"/></svg></u></div></header>
    <div class="remote">
      <div class="icons">
<div class="c"><svg><use href="#docs"/></svg><p>我的文档</p></div>
<div class="c"><svg><use href="#pc"/></svg><p>我的电脑</p></div>
<div class="c"><svg><use href="#net"/></svg><p>网上邻居</p></div>
<div class="c"><svg><use href="#bin"/></svg><p>回收站</p></div>
<div class="c"><svg><use href="#ie"/></svg><p><i>Internet<br>Explorer</i></p></div>
<div class="c k"><svg><use href="#lotus"/></svg><p><i>Lotus Notes<br>7</i></p></div>
<div class="c"><svg><use href="#folder"/></svg><p><i>WinntTcp</i></p></div>
<div class="c"><svg><use href="#folder"/></svg><p><i>ZHX005</i></p></div>
<div class="c"><svg><use href="#folder"/></svg><p>动力环境监<br>控</p></div>
<div class="c"><svg><use href="#folder"/></svg><p>分支局长助<br>理交流<i>...</i></p></div>
<div class="c"><svg><use href="#folder"/></svg><p>新建文件夹</p></div>
<div class="c"><svg><use href="#folder"/></svg><p>新建文件夹<br><i>(2)</i></p></div>
<div class="c"><svg><use href="#folder"/></svg><p><svg class="blot sm" viewBox="0 0 28 11"><path d="M2 2Q10-1 26 2q4 5-2 8L10 9Q0 10 0 5z"/></svg><i>AG</i>资料</p></div>
<div class="c k"><svg><use href="#phone"/></svg><p><i>HLR</i>受理台</p></div>
<div class="c"><svg><use href="#xdoc"/></svg><p>：支付对象<br>未清理<i>...</i></p></div>
<div class="c"><svg><use href="#xdoc2"/></svg><p>【<i>6</i>月通知】<br><i>5</i>月份全<i>...</i></p></div>
<div class="c"><svg><use href="#xdoc"/></svg><p><i>3</i>季度政企业<br>务故障超<i>...</i></p></div>
<div class="c"><svg><use href="#xdoc"/></svg><p><i>4</i>月重点业务<br>发展统计</p></div>
<div class="c"><svg><use href="#scan"/></svg><p><i>9B754470</i></p></div>
<div class="c"><svg><use href="#xdoc"/></svg><p><i>123</i></p></div>
<div class="c"><svg><use href="#note"/></svg><p><i>336</i>局<i>C300</i><br>网元配<i>...</i></p></div>
<div class="c k"><svg><use href="#s360"/></svg><p><i>360</i>安全卫士</p></div>
<div class="c k"><svg><use href="#p360"/></svg><p><i>360</i>手机助手</p></div>
<div class="c"><svg><use href="#xdoc2"/></svg><p><i>2012</i>年<br><i>12-2013...</i></p></div>
<div class="c"><svg><use href="#xdoc2"/></svg><p><i>2014</i>年<i>1</i>月大<br>面积故障<i>...</i></p></div>
<div class="c"><svg><use href="#xdoc"/></svg><p><i>2014</i>年<i>2</i>月第<br><i>1</i>批<i>FTTB...</i></p></div>
<div class="c"><svg><use href="#note"/></svg><p><i>3598888</i></p></div>
<div class="c"><svg><use href="#txt"/></svg><p><i>3670666(...</i></p></div>
<div class="c"><svg><use href="#note"/></svg><p><i>3670666JG</i></p></div>
<div class="c"><svg><use href="#note"/></svg><p><i>3670666JG2</i></p></div>
<div class="c"><svg><use href="#txt"/></svg><p><i>3670666JG2</i></p></div>
<div class="c"><svg><use href="#pdf"/></svg><p><i>AdbeRdr7...</i></p></div>
<div class="c"><svg><use href="#scan"/></svg><p><i>CD9BD300</i></p></div>
<div class="c"><svg><use href="#rar"/></svg><p><i>Cnv020000_1</i></p></div>
<div class="c"><svg><use href="#dbm"/></svg><p><i>dbm12</i></p></div>
<div class="c"><svg><use href="#xdoc"/></svg><p><i>FTTH</i>地址导<br>入</p></div>
<div class="c"><svg><use href="#xdoc"/></svg><p><i>FTTx</i>停用端<br>位</p></div>
<div class="c"><svg><use href="#xdoc"/></svg><p><i>1111</i></p></div>
<div class="c"><svg><use href="#note"/></svg><p><i>mml</i></p></div>
<div class="c"><svg><use href="#xdoc"/></svg><p><i>query_text</i></p></div>
      </div>
      <div class="icons toprow">
<div class="c"><svg><use href="#wdoc"/></svg></div><div class="c"><svg><use href="#xdoc"/></svg></div><div class="c"><svg><use href="#xdoc"/></svg></div><div class="c"><svg><use href="#xdoc"/></svg></div><div class="c"><svg><use href="#xdoc"/></svg></div><div class="c"><svg><use href="#note"/></svg></div><div class="c"><svg><use href="#xdoc"/></svg></div><div class="c"><svg><use href="#dll"/></svg></div>
      </div>

      <article class="nn">
        <header class="nt"><span class="zte">ZTE</span><span class="ttl"><i>NetNumen U31 </i>统一网管系统<i> - </i>客户端<i> - jiangyou @</i></span><svg class="blot" width="106" height="12" viewBox="0 0 106 12" preserveAspectRatio="none"><path d="M2 3l40-1 30 1 28 0q8 4 2 7l-34 1-40-1-24 0Q-2 8 2 3z"/></svg><span class="ttl"><i>3(ZTE-EPON)</i></span></header>
        <nav class="menu"><a>系统(<u>S</u>)</a><a>拓扑(<u>T</u>)</a><a>告警(<u>F</u>)</a><a>性能(<u>P</u>)</a><a>配置(<u>C</u>)</a><a>维护(<u>M</u>)</a><a>安全(<u>E</u>)</a><a>统计(<u>A</u>)</a><a>收藏(<u>V</u>)</a><a>窗口(<u>W</u>)</a><a>帮助(<u>H</u>)</a><a class="last">总</a></nav>
        <div class="tools main"><hr><svg><use href="#usr"/></svg><svg><use href="#lock"/></svg><svg><use href="#la"/></svg><s></s><svg><use href="#ra"/></svg><s></s><hr><svg><use href="#globe"/></svg><hr><svg><use href="#alarm"/></svg><svg><use href="#alarm2"/></svg><svg><use href="#alarm3"/></svg><hr><svg><use href="#tbl"/></svg><svg><use href="#tblz"/></svg><hr><svg><use href="#boxg"/></svg><svg><use href="#clk"/></svg><span class="onu"><svg><use href="#onu"/></svg><small>ONU</small></span><svg><use href="#dots"/></svg><hr><svg><use href="#unp"/></svg><hr><svg><use href="#help"/></svg></div>
        <div class="split">
          <div class="lcol">
            <div class="tab"><svg width="70" height="22" viewBox="0 0 70 22"><path d="M.5 22V4q0-3 4-3.500H46q3 0 6 4L69 22z" fill="#b4cdf8" stroke="#a4b8d4"/></svg><span>网元树</span></div>
            <div class="panel">
              <div class="filter"><div class="combo wide"><span>输入过滤条件</span><b></b></div><svg><use href="#funl"/></svg><svg><use href="#find"/></svg></div>
              <div class="tree">
                <ul>
<li class="r"><svg><use href="#olt"/></svg><span>绵阳江油 _322局_OLT1_C300</span></li>
<li class="n"><svg><use href="#olt"/></svg><span>绵阳江油 _326局_OLT1_C300</span></li>
<li class="n"><svg><use href="#olt"/></svg><span>绵阳江油 _326局_OLT2_C300</span></li>
<li class="r"><svg><use href="#olt"/></svg><span>绵阳江油 _336局_OLT1_C300</span></li>
<li class="r"><svg><use href="#olt"/></svg><span>绵阳江油_365局_OLT1_C300</span></li>
<li><svg><use href="#olth"/></svg><span>绵阳江油_367局_OLT1_C300</span></li>
<li class="n"><svg><use href="#olt"/></svg><span>绵阳江油_903局华丰1_OLT1_C300</span></li>
<li><svg><use href="#olth"/></svg><span>绵阳江油_903局华丰2_OLT1_C300</span></li>
<li class="n"><svg><use href="#olt"/></svg><span>绵阳江油_柏林_OLT1_C300</span></li>
<li class="n"><svg><use href="#olt"/></svg><span>绵阳江油_茶店村_OLT1_C300</span></li>
<li class="r"><svg><use href="#olt"/></svg><span>绵阳江油_长钢四厂_OLT1_C200</span></li>
<li class="n sel"><svg><use href="#olt"/></svg><span>绵阳江油_长钢总厂_OLT-C300-2</span></li>
<li class="r"><svg><use href="#olt"/></svg><span>绵阳江油_东安乡_OLT1_C200</span></li>
<li><svg><use href="#olth"/></svg><span>绵阳江油_东兴乡_OLT1_C200</span></li>
<li class="r"><svg><use href="#olt"/></svg><span>绵阳江油_二桥局_OLT1_C220</span></li>
                </ul>
                <div class="js jv"><b class="up"></b><i style="margin-top:20px;height:110px"></i><b class="dn"></b></div>
                <div class="js jh"><b class="lf"></b><i style="width:217px"></i><b class="rg"></b></div>
              </div>
            </div>
            <div class="arrows"><s class="u"></s><s></s></div>
          </div>
          <div class="vsplit"><s class="l"></s><s class="rr"></s><div></div></div>
          <div class="rcol">
            <div class="mtools">
              <div class="tools"><svg><use href="#gear"/></svg><hr><span class="on"><svg><use href="#cur"/></svg></span><svg><use href="#hand"/></svg><svg><use href="#mags"/></svg><hr><svg><use href="#magm"/></svg><div class="slider"><b></b></div><svg><use href="#magp"/></svg><svg><use href="#mago"/></svg><svg><use href="#fit"/></svg><svg><use href="#undo"/></svg></div>
              <div class="tools"><svg><use href="#cal"/></svg><svg><use href="#spl"/></svg></div>
            </div>
            <div class="map">
<div class="nd n" style="left:118px;top:-1px"><svg><use href="#olt"/></svg><p>绵阳江油 _326局_OLT2_<br>C300</p></div>
<div class="nd r" style="left:85px;top:39px"><svg><use href="#olt"/></svg><p>绵阳江油 _322局_OLT1_<br>C300</p></div>
<div class="nd n" style="left:163px;top:39px"><svg><use href="#olt"/></svg><p>绵阳江油 _326局_OLT1_<br>C300</p></div>
<div class="nd r" style="left:241px;top:39px"><svg><use href="#olt"/></svg><p>绵阳江油 _336局_OLT1_<br>C300</p></div>
<div class="nd r" style="left:319px;top:39px"><svg><use href="#olt"/></svg><p>绵阳江油 _365局_OLT1_<br>C300</p></div>
<div class="nd" style="left:85px;top:81px"><svg><use href="#olth"/></svg><p>绵阳江油_东兴乡_OLT1_C2<br>00</p></div>
<div class="nd r" style="left:163px;top:81px"><svg><use href="#olt"/></svg><p>绵阳江油_二桥局_OLT1_C2<br>20</p></div>
<div class="nd r" style="left:241px;top:81px"><svg><use href="#olt"/></svg><p>绵阳江油_河口乡_OLT1_C2<br>00</p></div>
<div class="nd r" style="left:319px;top:81px"><svg><use href="#olt"/></svg><p>绵阳江油_厚坝镇_OLT1_C2<br>00</p></div>
<div class="nd n" style="left:89px;top:95px"><svg><use href="#olt"/></svg><p>绵阳江油_903局华丰1_OLT<br>1_C300</p></div>
<div class="nd r" style="left:85px;top:123px"><svg><use href="#olt"/></svg><p>绵阳江油_龙凤镇_OLT1_C2<br>00</p></div>
<div class="nd n" style="left:163px;top:123px"><svg><use href="#olt"/></svg><p>绵阳江油_马角_OLT1_C30<br>0</p></div>
<div class="nd r" style="left:241px;top:123px"><svg><use href="#olt"/></svg><p>绵阳江油_马角坝_OLT1_C2<br>00</p></div>
<div class="nd r" style="left:319px;top:123px"><svg><use href="#olt"/></svg><p>绵阳江油_青莲镇_OLT1_C2<br>00</p></div>
<div class="nd n" style="left:275px;top:132px"><svg><use href="#olt"/></svg><p>绵阳江油_西屏_OLT1_C30<br>0</p></div>
<div class="nd r" style="left:85px;top:164px"><svg><use href="#olt"/></svg><p>绵阳江油_文胜乡_OLT1_C2<br>00</p></div>
<div class="nd r" style="left:163px;top:164px"><svg><use href="#olt"/></svg><p>绵阳江油_西屏乡_OLT1_C2<br>20</p></div>
<div class="nd r" style="left:241px;top:164px"><svg><use href="#olt"/></svg><p>绵阳江油_小溪坝_OLT1_C2<br>00</p></div>
<div class="nd r" style="left:319px;top:164px"><svg><use href="#olt"/></svg><p>绵阳江油_新安镇_OLT1_C2<br>00</p></div>
<div class="nd r" style="left:85px;top:206px"><svg><use href="#olt"/></svg><p>绵阳江油_战旗镇_OLT1_C2<br>00</p></div>
<div class="nd r" style="left:163px;top:206px"><svg><use href="#olt"/></svg><p>绵阳江油_长明镇_OLT1_C2<br>00</p></div>
<div class="nd n" style="left:241px;top:206px"><svg><use href="#olt"/></svg><p>绵阳江油_重华_OLT1_C30<br>0</p></div>
<div class="nd r" style="left:319px;top:206px"><svg><use href="#olt"/></svg><p>绵阳江油_重兴镇_OLT1_C2<br>00</p></div>
<div class="nd" style="left:237px;top:225px"><svg><use href="#olth"/></svg><p>绵阳江油_903局华丰2_OLT<br>1_C300</p></div>
<div class="nd" style="left:291px;top:228px"><svg><use href="#olth"/></svg><p>绵阳江油 长明镇</p></div>
<div class="nd n pick" style="left:11px;top:222px"><svg><use href="#olt"/></svg><p>绵阳江油_长钢总厂_OLT-C3<br>00-2</p></div>
            </div>
            <div class="js jh mapbar"><b class="lf"></b><i></i></div>
            <div class="arrows dotted"><s class="u"></s><s></s></div>
            <div class="tools ttools"><svg><use href="#cls"/></svg><hr><svg><use href="#exp"/></svg><svg><use href="#exp2"/></svg><svg><use href="#prn"/></svg><svg><use href="#key"/></svg><hr><svg><use href="#nav1"/></svg><svg><use href="#nav2"/></svg><svg><use href="#nav3"/></svg><svg><use href="#nav4"/></svg><label>第</label><span class="pg">1</span><label>页</label></div>
            <div class="grid">
              <div class="hd"><span>行号</span><span>名称</span><span>ID</span><span>类型</span></div>
              <div class="row"><span>1</span><span><svg><use href="#ne"/></svg>绵阳江油_903局...</span><span>TIME13902820326...</span><span>C300</span></div>
            </div>
          </div>
        </div>
        <div class="hdots"></div>
        <div class="bottom">
          <div class="btabs"><a class="on">网元监控告警</a><a>性能</a></div>
          <div class="bmain">
            <div class="tools"><svg><use href="#exp"/></svg><s class="blk"></s><svg><use href="#prn"/></svg><hr><svg><use href="#edit"/></svg><hr><svg><use href="#key"/></svg><svg><use href="#ref"/></svg><label>告警级别:</label><div class="combo"><span>所有</span><b></b></div><label class="l2">确认状态:</label><div class="combo c2"><span>所有</span><b></b></div><label class="l3">可见性:</label><div class="combo c3"><span>可见告警</span></div></div>
            <div class="bh"><span>行号</span><span>网元</span><span>发生时间</span></div>
          </div>
        </div>
      </article>
    </div>
    <div class="sb v"><span class="b up"></span><span class="th" style="height:528px"></span><span class="b dn"></span></div>
    <div class="sb h"><span class="b lf"></span><span class="th" style="width:652px"></span><span class="b rt2"></span></div>
    <div class="grip"></div>
  </section>
</main>

<footer class="bar">
  <button class="start"><svg><use href="#win"/></svg>开始</button>
  <span class="q"><svg><use href="#ie"/></svg></span><span class="q"><svg><use href="#ff"/></svg></span>
  <button class="t"><svg><use href="#seek"/></svg></button>
  <button class="t st"><svg><use href="#vm"/></svg></button>
  <button class="t"><svg><use href="#cmd"/></svg></button>
  <button class="t"><svg><use href="#expl"/></svg></button>
  <button class="t"><svg><use href="#nb"/></svg></button>
  <button class="t on"><svg><use href="#rdp"/></svg></button>
  <div class="tray"><svg class="chev" viewBox="0 0 8 10"><path d="M1 4l3-3 3 3M1 9l3-3 3 3" fill="none" stroke="#000" stroke-width="1.500"/></svg><svg><use href="#t1"/></svg><svg class="s12"><use href="#t2"/></svg><svg><use href="#t3"/></svg><svg><use href="#t4"/></svg><svg><use href="#t5"/></svg><svg><use href="#t6"/></svg><svg><use href="#t7"/></svg><time>2:58</time><span class="show"></span></div>
</footer>
<div class="mark">www.wooyun.org</div>
</body>
</html>
```
FILE: styles.css
```css
* { box-sizing: border-box; }
body { margin: 0; width: 1366px; height: 768px; overflow: hidden; position: relative; background: #3a6ea5; font: 12px/14px "Liberation Sans", "Noto Sans CJK SC", sans-serif; color: #000; }
p, ul { margin: 0; padding: 0; }
.defs { position: absolute; }
svg { display: block; flex: none; }
.desk { position: relative; width: 1366px; height: 741px; overflow: hidden; }
.dk { position: absolute; width: 75px; display: flex; justify-content: center; }
.dk svg { width: 24px; height: 24px; }
.frag { position: absolute; font: 13px/16px "Noto Sans", "Noto Sans CJK SC", sans-serif; color: #dce8f4; }
.cap { position: absolute; top: 699px; width: 75px; display: flex; flex-direction: column; align-items: center; text-align: center; white-space: nowrap; color: #fff; font: 12px/17px "Noto Sans", sans-serif; letter-spacing: .1px; }

/* classic remote desktop windows */
.rdp { position: absolute; display: grid; grid-template: 19px 1fr 17px / 1fr 16px; background: #d4d0c8; border: 1px solid; border-color: #d4d0c8 #404040 #404040 #d4d0c8; box-shadow: inset 1px 1px #fff, inset -1px -1px #808080; }
.rdp-back { left: 8px; top: 26px; width: 983px; height: 695px; padding: 3px 2px 2px 3px; }
.rdp-front { left: 368px; top: 0; width: 984px; height: 695px; padding: 3px 3px 2px 3px; }
.rt { grid-column: 1 / 3; height: 18px; display: flex; align-items: center; padding-left: 2px; background: #808080; color: #d4d0c8; font: bold 13px/18px "Liberation Mono", "Noto Sans CJK SC", monospace; }
.rdp-front .rt { background: linear-gradient(90deg, #0a246a, #a6caf0); color: #fff; }
.i16 { width: 15px; height: 16px; }
.rt .blot { margin-left: -1px; z-index: 2; }
.rt .d { width: 13px; text-align: center; }
.rdp-back .rt b:first-of-type { margin-left: -5px; }
.rdp-back .rt .d { margin: 0 4px 0 2px; }
.rdp-back .blot { width: 94px; }
.rdp-front .rt .d { margin: 0 2px 0 -1px; }
.wb { margin-left: auto; padding-right: 3px; display: flex; align-items: center; }
.wb u { width: 16px; height: 14px; background: #d4d0c8; border: 1px solid; border-color: #fff #404040 #404040 #fff; box-shadow: inset -1px -1px #808080; display: flex; align-items: center; justify-content: center; }
.wb .x { margin-left: 2px; }
.min::after { content: ""; width: 6px; height: 2px; background: #000; margin: 7px 3px 0 0; }
.max::after { content: ""; width: 9px; height: 9px; border: 1px solid #000; border-top-width: 2px; }
.remote { position: relative; overflow: hidden; background: #004e98; display: flex; align-items: flex-start; }
.icons { display: grid; grid-auto-flow: column; grid-template-rows: repeat(8, 82px); grid-auto-columns: 75px; padding-top: 2px; margin-left: -1px; flex: none; }
.toprow { grid-template-rows: 82px; margin-left: 0; }
.c { display: flex; flex-direction: column; align-items: center; position: relative; }
.c > svg { width: 32px; height: 32px; }
.c p { margin-top: 3px; color: #fff; text-align: center; white-space: nowrap; font: 12px/12px "Noto Sans CJK SC", sans-serif; }
.shade p { text-shadow: 1px 1px 2px #001c40; }
.c i { font-family: "Liberation Mono", monospace; font-style: normal; letter-spacing: -1.2px; white-space: pre; }
.k::before { content: ""; position: absolute; left: 22px; top: 21px; width: 11px; height: 11px; border: 1px solid #444; background: #fff; }
.k::after { content: ""; position: absolute; left: 24px; top: 23px; width: 7px; height: 7px; background: #000; clip-path: polygon(25% 0, 100% 0, 100% 75%, 76% 52%, 45% 75%, 38% 100%, 5% 100%, 10% 68%, 50% 28%); }
.nnico em { position: absolute; left: 22px; top: -2px; font: 9px/9px "DejaVu Sans", sans-serif; letter-spacing: 1.5px; color: #1010b8; }
.nnico em.v { left: 46px; top: 7px; writing-mode: vertical-rl; letter-spacing: 0; font-size: 8px; }
.blot { fill: #000; }
.blot.sm { display: inline-block; width: 28px; height: 11px; vertical-align: -2px; margin: 0 -1px 0 -3px; }

.sb { display: flex; background: repeating-conic-gradient(#fff 0 25%, #d4d0c8 0 50%) 0 0 / 2px 2px; }
.sb.v { flex-direction: column; }
.sb.h { padding-top: 1px; }
.b, .th { flex: none; width: 16px; height: 16px; background: #d4d0c8; border: 1px solid; border-color: #d4d0c8 #404040 #404040 #d4d0c8; box-shadow: inset 1px 1px #fff, inset -1px -1px #808080; }
.b { display: flex; align-items: center; justify-content: center; }
.b::after { content: ""; border: 4px solid transparent; }
.b.up::after { border-width: 0 4px 4px; border-bottom-color: #000; }
.b.dn { margin-top: auto; }
.b.rt2 { margin: 0 0 0 auto; }
.b.dn::after { border-width: 4px 4px 0; border-top-color: #000; }
.b.lf::after { border-width: 4px 4px 4px 0; border-right-color: #000; }
.b.rt2::after { border-width: 4px 0 4px 4px; border-left-color: #000; }
.grip { margin: 4px 1px 1px 2px; background: repeating-linear-gradient(135deg, transparent 0 2px, #fff 2px 3px, #808080 3px 4.500px); clip-path: polygon(100% 0, 100% 100%, 0 100%); }

/* network management client */
.nn { position: absolute; left: 345px; top: 36px; width: 615px; height: 618px; border-left: 3px solid #0a3cd8; background: #f5f3e7; display: flex; flex-direction: column; overflow: hidden; }
.nt { flex: none; height: 29px; margin-left: -3px; padding: 1px 0 0 5px; display: flex; align-items: center; background: linear-gradient(#0846d8, #3c8cf8 2px, #0a58ea 6px, #0054e3 14px, #0a6cff 24px, #0040d0); border-radius: 6px 0 0 0; color: #fff; }
.zte { width: 16px; height: 16px; background: linear-gradient(90deg, #3040a0, #8894d8, #3040a0); font: 8px/16px "Liberation Sans", sans-serif; text-align: center; color: #dde; }
.ttl { margin-left: 4px; font: bold 14px/20px "Noto Sans CJK SC", sans-serif; white-space: pre; text-shadow: 1px 1px #0a1883; }
.ttl i { font: bold 13.330px/20px "Liberation Mono", monospace; }
.nt .blot { margin: 2px -8px 0 4px; z-index: 1; width: 106px; }
.nt .blot + .ttl { margin-left: 0; }
.menu { flex: none; height: 28px; display: grid; grid-template-columns: repeat(11, 54.500px) 20px; align-items: center; padding-left: 9px; background: linear-gradient(#f8f6ec, #edeadb); border-bottom: 1px solid #d0ccba; white-space: nowrap; }
.menu .last { border-left: 1px solid #c8c4b0; padding: 4px 0 4px 2px; margin-left: -5px; }
.tools { display: flex; align-items: center; }
.tools > svg, .tools .on svg, .onu svg { width: 24px; height: 17px; }
.tools hr { width: 1px; height: 23px; margin: 0 4px; border: 0; background: #bab7a8; flex: none; }
.tools s, .arrows s, .vsplit s { flex: none; border: solid transparent; border-width: 4px 4px 0; border-top-color: #888; }
.tools s { margin: 0 4px; }
.tools .blk { border-top-color: #000; margin: 0 1px 0 2px; }
.main { flex: none; height: 38px; padding-top: 2px; }
.onu { position: relative; width: 24px; }
.onu svg { margin-left: -3px; }
.onu small { position: absolute; left: 6px; bottom: 1px; font: bold 6px/6px "Liberation Sans", sans-serif; color: #2870c0; }
.split { display: flex; height: 455px; flex: none; }
.lcol { width: 299px; display: flex; flex-direction: column; }
.tab { position: relative; height: 25px; padding: 3px 0 0 6px; }
.tab span { position: absolute; left: 12px; top: 8px; }
.panel { flex: 1; display: flex; flex-direction: column; margin-left: 5px; width: 294px; border: 1px solid #b4cdf0; padding: 0 1px; }
.filter { flex: none; display: flex; align-items: center; height: 27px; margin-bottom: 4px; }
.filter > svg { width: 24px; height: 17px; }
.combo { flex: none; display: flex; align-items: center; width: 61px; height: 20px; border: 1px solid #6c6a5c; box-shadow: inset 0 0 0 1px #c8c4b4; background: #fff; padding: 0 2px 0 3px; }
.combo span { flex: 1; white-space: nowrap; overflow: hidden; }
.combo b { width: 17px; height: 16px; background: #f1eee0; border: 1px solid #6c6a5c; display: flex; align-items: center; justify-content: center; }
.combo b::after { content: ""; border: solid transparent; border-width: 4px 4px 0; border-top-color: #444; }
.combo.wide { width: 244px; height: 21px; padding-left: 2px; color: #777; }
.combo.wide b { height: 17px; }
.tree { flex: 1; display: grid; grid-template: 1fr 15px / 272px 15px; width: 289px; border: 1px solid #6c6a5c; background: #fff; overflow: hidden; min-height: 0; }
.tree ul { list-style: none; padding-top: 7px; overflow: hidden; background: linear-gradient(#7c8cac, #7c8cac) 67px 7px / 1px 100% no-repeat; min-height: 0; height: 374px; }
.tree li { height: 25px; display: flex; align-items: center; padding-left: 63px; white-space: nowrap; letter-spacing: .17px; fill: #a81818; }
.tree li::before { content: ""; flex: none; width: 9px; height: 9px; border: 1px solid #808080; background: linear-gradient(#000, #000) center / 5px 1px no-repeat, linear-gradient(#000, #000) center / 1px 5px no-repeat, #fff; }
.tree li svg { width: 28px; height: 12px; margin: 0 6px 0 0; padding-left: 12px; background: linear-gradient(#7c8cac, #7c8cac) 0 6px / 5px 1px no-repeat; }
.tree li.n { fill: #0808a0; }
.tree li span { line-height: 25px; }
.tree .sel span { height: 25px; line-height: 23px; background: #ffe08c; border: 1px solid #c8a040; padding-left: 0; }
.js { display: flex; background: linear-gradient(#f0ece4, #fff); }
.js b { flex: none; width: 15px; height: 15px; background: linear-gradient(135deg, #fff, #e4e0d0); border: 1px solid #77756a; display: flex; align-items: center; justify-content: center; }
.js b::after { content: ""; border: 4px solid transparent; }
.js i { border: 1px solid #5874a4; background: repeating-linear-gradient(90deg, #d0e0f8 0 1px, #8ca8d8 1px 3px) center / 14px 8px no-repeat, linear-gradient(#b4caf0, #84a4d4); }
.jv { flex-direction: column; }
.jv i { width: 15px; background: repeating-linear-gradient(#d0e0f8 0 1px, #8ca8d8 1px 3px) center / 8px 14px no-repeat, linear-gradient(90deg, #b4caf0, #84a4d4); }
.js .up::after { border-width: 0 4px 4px; border-bottom-color: #444; }
.js .dn { margin-top: auto; }
.js .dn::after { border-width: 4px 4px 0; border-top-color: #444; }
.js .lf::after { border-width: 4px 4px 4px 0; border-right-color: #222; }
.js .rg { margin: 0 15px 0 auto; }
.tree .jh { grid-column: 1 / 3; }
.js .rg::after { border-width: 4px 0 4px 4px; border-left-color: #222; }
.arrows { flex: none; height: 9px; display: flex; align-items: center; gap: 4px; padding-left: 3px; }
.arrows s { border-top-color: #aaa89c; }
.arrows s.u { border-width: 0 4px 4px; border-bottom-color: #aaa89c; }
.vsplit { width: 7px; padding: 2px 0 0 3px; display: flex; flex-direction: column; }
.vsplit s.l { border-width: 4px 4px 4px 0; border-color: transparent #aaa transparent transparent; }
.vsplit s.rr { border-width: 4px 0 4px 4px; border-color: transparent transparent transparent #aaa; margin-top: 4px; align-self: flex-start; }
.vsplit div { margin-top: 101px; height: 184px; width: 2px; background: repeating-linear-gradient(#b0ae9e 0 2px, transparent 2px 6px); }
.rcol { width: 306px; display: flex; flex-direction: column; overflow: hidden; }
.mtools { flex: none; height: 47px; padding-left: 3px; background: linear-gradient(#f8f6ea, #eae7d6); }
.mtools .tools { height: 23px; }
.mtools .tools + .tools { height: 25px; padding-left: 1px; }
.mtools .on { width: 24px; height: 23px; background: #c0bcac; display: flex; align-items: center; justify-content: center; }
.slider { width: 64px; height: 15px; background: linear-gradient(#000, #000) center / 52px 1px no-repeat #faf8ee; padding: 1px 0 0 17px; }
.slider b { display: block; width: 6px; height: 12px; background: #fff; border: solid #000; border-width: 0 1px 1px 0; }
.map { flex: none; height: 252px; position: relative; background: #7b9ec8; overflow: hidden; }
.nd { position: absolute; width: 0; display: flex; flex-direction: column; align-items: center; fill: #e01010; }
.nd.n { fill: #0808b8; }
.nd svg { width: 17px; height: 12px; }
.nd p { margin-top: 4px; font: bold 7px/8px "Liberation Mono", "Noto Sans CJK SC", monospace; letter-spacing: -.2px; white-space: nowrap; text-align: center; }
.pick svg { outline: 3px solid #fff; outline-offset: 6px; }
.pick p { margin-top: 5px; }
.mapbar { flex: none; height: 15px; }
.mapbar i { flex: 1; margin-left: 28px; background-position: 246px center, 0 0; border-right: 0; }
.rcol .arrows { height: 6px; padding-left: 4px; }
.dotted { background: repeating-linear-gradient(90deg, #b0ae9e 0 2px, transparent 2px 6px) 173px 2px / 133px 2px no-repeat; }
.ttools { flex: none; height: 27px; padding-left: 4px; white-space: nowrap; }
.ttools label { flex: none; width: 17px; }
.ttools .pg { flex: none; width: 38px; height: 21px; margin-right: 1px; padding: 3px 2px; border: 1px solid #6c6a5c; background: #f3f1e4; }
.grid { flex: 1; margin-left: 1px; background: #fff; border: 1px solid #6c6a5c; border-right: 0; overflow: hidden; }
.hd, .row { display: grid; grid-template-columns: 28px 120px 120px 60px; height: 20px; white-space: nowrap; background: linear-gradient(#fff, #eae7da); border-bottom: 1px solid #6c6a5c; }
.hd span { border-right: 1px solid #8c8a7c; padding: 3px 0 0 6px; }
.hd span:first-child { padding-left: 2px; }
.row { height: 23px; background: #fff; border-color: #aaa; }
.row span { display: flex; align-items: center; border-right: 1px solid #aaa; padding-left: 1px; overflow: hidden; }
.row span:first-child { justify-content: center; background: #f1eee2; }
.row svg { width: 14px; height: 19px; margin: 0 3px 0 -1px; }
.hdots { flex: none; height: 7px; background: repeating-linear-gradient(90deg, #b0ae9e 0 2px, transparent 2px 6px) 248px 2px / 370px 2px no-repeat; }
.bottom { flex: 1; display: flex; min-height: 0; }
.btabs { width: 95px; padding: 2px 0 0 2px; display: flex; flex-direction: column; }
.btabs a { height: 22px; border: 1px solid #c8a840; border-right: 0; text-align: center; line-height: 20px; background: #f7f4e6; border-radius: 5px 0 0 0; }
.btabs .on { background: #ffe090; }
.btabs a + a { margin-top: -1px; }
.bmain { flex: 1; min-width: 0; border: solid #c8a840; border-width: 1px 0 0 1px; padding-left: 3px; }
.bmain .tools { height: 37px; padding-left: 3px; background: linear-gradient(#fbf9ef, #eae7d8); white-space: nowrap; }
.bmain .tools > * { flex-shrink: 0; }
.bmain label { margin-left: 5px; width: 61px; }
.bmain .l2 { margin-left: 6px; width: 62px; }
.bmain .l3 { margin-left: 6px; width: 50px; }
.c2 { width: 72px; }
.bh { display: grid; grid-template-columns: 35px 408px 90px; height: 24px; border: solid #6c6a5c; border-width: 1px 0 0 1px; background: linear-gradient(#fff, #efecdf); white-space: nowrap; }
.bh span { padding: 4px 0 0 1px; border-right: 1px solid #6c6a5c; }
.bh span:first-child { padding-left: 5px; }

/* taskbar */
.bar { height: 27px; display: flex; align-items: center; padding: 1px 2px 0; background: #d4d0c8; box-shadow: inset 0 1px #fff; }
.bar svg { width: 18px; height: 17px; }
.start, .t { display: flex; align-items: center; justify-content: center; height: 23px; padding: 0; background: #d4d0c8; border: 1px solid; border-color: #fff #404040 #404040 #fff; box-shadow: inset -1px -1px #808080; font: 12px "Noto Sans CJK SC", sans-serif; color: #000; }
.start { width: 48px; margin-right: 8px; }
.q { width: 33px; display: flex; justify-content: center; }
.t { width: 32px; margin-right: 2px; }
.q + .t { margin-left: 2px; }
.st { padding-right: 8px; background: linear-gradient(90deg, transparent 23px, #404040 23px 24px, #fff 24px 25px, transparent 25px 27px, #404040 27px 28px, #fff 28px 29px, transparent 29px) #d4d0c8; }
.t.on { background: repeating-conic-gradient(#fff 0 25%, #eae8e4 0 50%) 0 0 / 2px 2px; border-color: #404040 #fff #fff #404040; box-shadow: inset 1px 1px #808080; width: 30px; }
.tray { margin-left: auto; width: 252px; height: 22px; display: flex; align-items: center; gap: 8px; padding-left: 5px; border: 1px solid; border-color: #808080 #fff #fff #808080; }
.tray svg { width: 16px; height: 16px; }
.tray .chev { width: 8px; height: 10px; margin-right: 1px; }
.tray .s12 { width: 12px; height: 13px; margin: 0 2px; }
.tray time { font: 12px "Noto Sans", sans-serif; margin-left: 7px; }
.show { width: 18px; height: 11px; margin-left: auto; background: linear-gradient(135deg, #1050b0, #58a0e8); border: 1px solid #345; }
.mark { position: absolute; right: 1px; bottom: -1px; font: 17px/20px "Liberation Sans", sans-serif; letter-spacing: .6px; color: #505050; opacity: .85; text-shadow: 1px 1px #ccc; }
```
